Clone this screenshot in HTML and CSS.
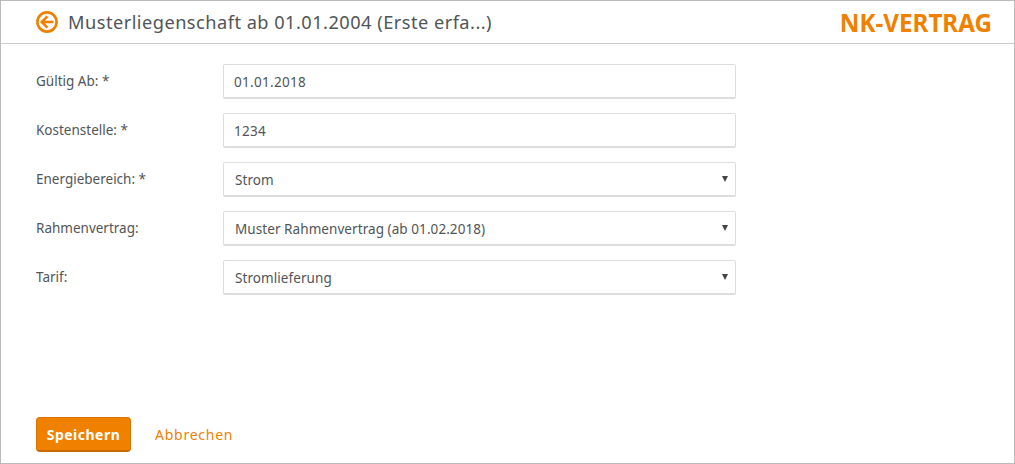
FILE: index.html
```html
<html>
  <head>
    <meta charset="utf-8">
    <title>NK-Vertrag</title>
    <link rel="stylesheet" href="styles.css">
  </head>
  <body>
    <div class="page">
      <div class="header">
        <a class="back" href="#">
          <svg viewBox="0 0 22 22" width="22" height="22" fill="none" stroke="#f08000" stroke-width="2.6">
            <circle cx="11" cy="11" r="9.6" />
            <path d="M17.5 11H6M11.4 5.4 5.8 11l5.6 5.6" />
          </svg>
        </a>
        <h1>Musterliegenschaft ab 01.01.2004 (Erste erfa...)</h1>
        <div class="brand">NK-VERTRAG</div>
      </div>
      <form class="form">
        <div class="row">
          <label>Gültig Ab: *</label>
          <input type="text" value="01.01.2018">
        </div>
        <div class="row">
          <label>Kostenstelle: *</label>
          <input type="text" value="1234">
        </div>
        <div class="row">
          <label>Energiebereich: *</label>
          <div class="select-wrap">
            <select><option>Strom</option></select>
          </div>
        </div>
        <div class="row">
          <label>Rahmenvertrag:</label>
          <div class="select-wrap">
            <select><option>Muster Rahmenvertrag (ab 01.02.2018)</option></select>
          </div>
        </div>
        <div class="row">
          <label>Tarif:</label>
          <div class="select-wrap">
            <select><option>Stromlieferung</option></select>
          </div>
        </div>
      </form>
      <div class="actions">
        <button type="button" class="btn-save">Speichern</button>
        <a class="btn-cancel" href="#">Abbrechen</a>
      </div>
    </div>
  </body>
</html>
```

FILE: styles.css
```css
html {
  height: 100%;
}
body {
  margin: 0;
  padding: 0;
  height: 100%;
  font-family: "Noto Sans", Arial, sans-serif;
  font-size: 14px;
  color: #505558;
  background-color: #fff;
}
.page {
  box-sizing: border-box;
  height: 464px;
  border: 1px solid #bbb;
  display: flex;
  flex-direction: column;
}
.header {
  box-sizing: border-box;
  height: 43px;
  border-bottom: 1px solid #ccc;
  padding: 0 22px 0 35px;
  display: flex;
  align-items: center;
}
.back {
  display: flex;
  margin-right: 10px;
}
.header h1 {
  margin: 0;
  flex: 1;
  font-size: 18.2px;
  font-weight: normal;
  letter-spacing: 0.48px;
  color: #505558;
}
.brand {
  font-size: 24.2px;
  font-weight: bold;
  color: #f08000;
}
.form {
  padding: 20px 0 0 35px;
  display: flex;
  flex-direction: column;
  gap: 14px;
}
.row {
  display: flex;
  align-items: flex-start;
}
.row label {
  width: 187px;
  padding-top: 8px;
  font-size: 13.5px;
  line-height: 18px;
}
.row input,
.row select {
  box-sizing: border-box;
  display: block;
  width: 513px;
  height: 35px;
  padding: 2px 10px 0;
  border: 1px solid #ddd;
  border-bottom: 2px solid #ddd;
  border-radius: 2px;
  background-color: #fff;
  font-family: inherit;
  font-size: 13.5px;
  letter-spacing: 0.3px;
  color: #505558;
  outline: none;
  appearance: none;
}
.row select {
  padding-left: 11px;
  letter-spacing: 0.07px;
}
.select-wrap {
  position: relative;
}
.select-wrap::after {
  content: '';
  position: absolute;
  top: 14px;
  right: 8px;
  border-left: 3px solid transparent;
  border-right: 3px solid transparent;
  border-top: 6px solid #444;
}
.actions {
  margin-top: auto;
  padding: 0 0 10px 35px;
  display: flex;
  align-items: center;
}
.btn-save {
  box-sizing: border-box;
  width: 95px;
  height: 35px;
  margin-bottom: 1px;
  border: 1px solid #d97400;
  border-bottom: 2px solid #c96c00;
  border-radius: 4px;
  background-color: #f08000;
  color: #fff;
  font-family: inherit;
  font-size: 14px;
  font-weight: bold;
  letter-spacing: 0.5px;
  cursor: pointer;
}
.btn-cancel {
  margin-left: 24px;
  margin-bottom: 2px;
  color: #f08000;
  font-size: 14px;
  letter-spacing: 0.75px;
  text-decoration: none;
}
```
